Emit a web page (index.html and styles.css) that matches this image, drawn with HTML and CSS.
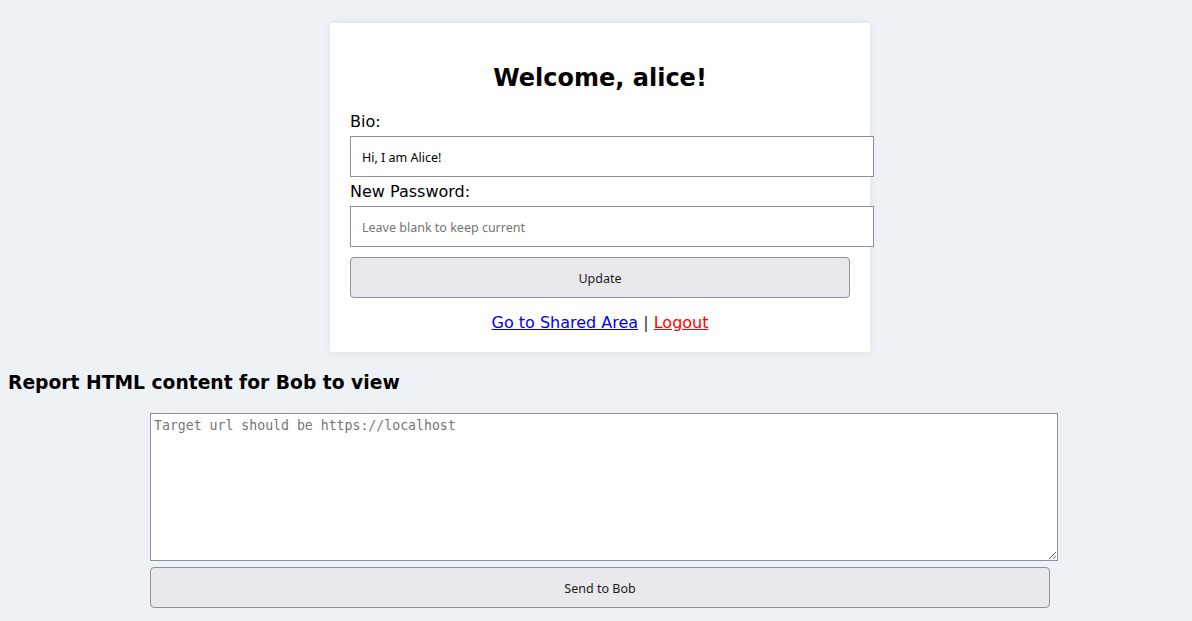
FILE: index.html
```html
<!DOCTYPE html>
<html>
<head>
<meta charset="utf-8">
<title>Profile</title>
<link rel="stylesheet" href="styles.css">
</head>
<body>
<div class="wrap">
  <div class="card">
    <h2 class="title">Welcome, alice!</h2>
    <form class="form">
      <label class="label" for="bio">Bio:</label>
      <input class="field" id="bio" type="text" value="Hi, I am Alice!">
      <label class="label" for="pw">New Password:</label>
      <input class="field" id="pw" type="password" placeholder="Leave blank to keep current">
      <button class="btn" type="button">Update</button>
    </form>
    <p class="links"><a class="link" href="#">Go to Shared Area</a> | <a class="link logout" href="#">Logout</a></p>
  </div>
</div>
<h3 class="report-title">Report HTML content for Bob to view</h3>
<div class="wrap">
  <form class="report">
    <textarea class="report-area" placeholder="Target url should be https://localhost"></textarea>
    <button class="btn send" type="button">Send to Bob</button>
  </form>
</div>
</body>
</html>
```
FILE: styles.css
```css
html { background: #eef1f6; }
body {
  margin: 8px;
  background: #eef1f6;
  font-family: "DejaVu Sans", sans-serif;
  font-size: 16px;
  color: #000;
}
.wrap { padding-left: 8px; }
.card {
  width: 500px;
  margin: 15px auto 0;
  padding: 20px;
  background: #fff;
  box-shadow: 0 0 8px rgba(0, 0, 0, 0.08);
}
.title {
  margin: 21px 0 20px;
  text-align: center;
  font-size: 24px;
  line-height: 28px;
  font-weight: bold;
}
.form { display: flex; flex-direction: column; align-items: flex-start; }
.label { display: block; line-height: 19px; margin-bottom: 5px; }
.field {
  width: 500px;
  box-sizing: content-box;
  padding: 11px 11px 9px;
  margin: 0 0 5px;
  border: 1px solid #8f8f9d;
  border-radius: 0;
  font-family: "Noto Sans", sans-serif;
  font-size: 12.5px;
  line-height: 19px;
  height: 19px;
  color: #000;
  background: #fff;
  outline: none;
}
.field::placeholder { color: #757575; opacity: 1; }
.btn {
  width: 500px;
  height: 41px;
  margin-top: 5px;
  border: 1px solid #8f8f9d;
  border-radius: 4px;
  background: #e9e8ed;
  font-family: "Noto Sans", sans-serif;
  font-size: 12.5px;
  color: #1b1b1b;
  padding: 2px 0 0;
}
.links {
  margin: 15px 0 0;
  text-align: center;
  line-height: 19px;
  color: #333;
}
.link { color: #0000ee; }
.logout { color: #ff0000; }
.report-title {
  margin: 20px 0 19px;
  font-size: 18.72px;
  line-height: 22px;
  font-weight: bold;
}
.report { width: 900px; margin: 0 auto; display: flex; flex-direction: column; align-items: flex-start; }
.report-area {
  width: 900px;
  height: 140px;
  box-sizing: content-box;
  padding: 3px;
  margin: 0;
  border: 1px solid #8f8f9d;
  border-radius: 0;
  font-family: "DejaVu Sans Mono", monospace;
  font-size: 13.2px;
  line-height: 17px;
  background: #fff;
}
.report-area::placeholder { color: #757575; opacity: 1; }
.send { width: 900px; margin-top: 6px; }
```
